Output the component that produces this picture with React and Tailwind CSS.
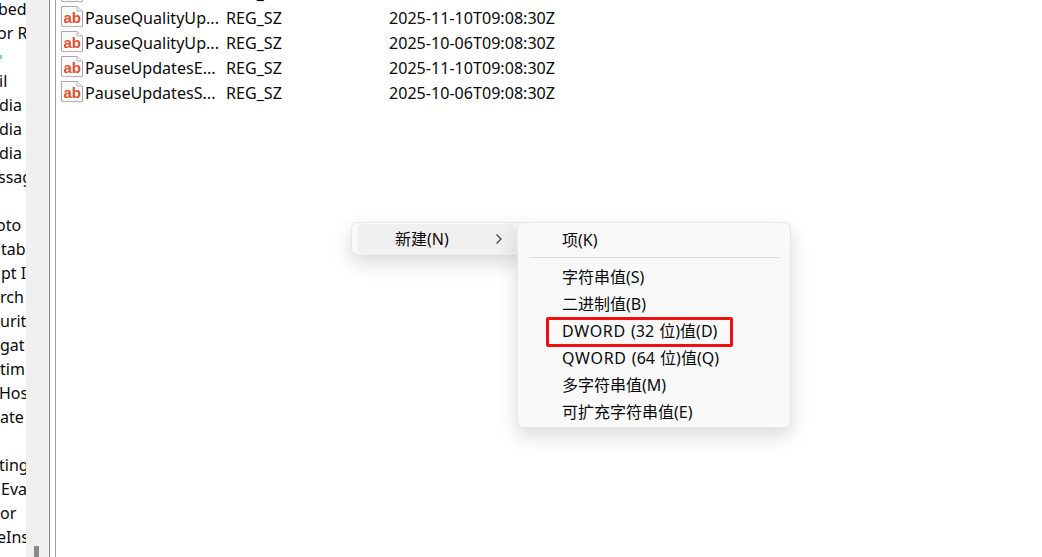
import React from "react";

const UI = { fontFamily: '"Noto Sans", "Noto Sans CJK SC", sans-serif' };

const tree = [
  ["bed", "-ml-[2px]"], ["or R", "-ml-[3px]"], ["", "ml-0"], ["il", "-ml-[1px]"], ["dia", "-ml-[1px]"], ["dia", "-ml-[1px]"], ["dia", "-ml-[1px]"], ["ssag", "-ml-[2px]"], ["", "ml-0"],
  ["oto", "-ml-[4px]"], ["tab", "ml-[1px]"], ["pt I", "ml-[1px]"], ["rch", "ml-0"], ["urit", "ml-0"], ["gat", "ml-0"], ["tim", "ml-0"], ["Hos", "-ml-[1px]"], ["ate", "ml-0"], ["", "ml-0"],
  ["ting", "-ml-[1px]"], ["Eva", "ml-[1px]"], ["or", "ml-0"], ["eIns", "-ml-[3px]"],
];

const rows = [
  ["PauseFeatureSt...", "REG_SZ", ""],
  ["PauseQualityUp...", "REG_SZ", "2025-11-10T09:08:30Z"],
  ["PauseQualityUp...", "REG_SZ", "2025-10-06T09:08:30Z"],
  ["PauseUpdatesE...", "REG_SZ", "2025-11-10T09:08:30Z"],
  ["PauseUpdatesS...", "REG_SZ", "2025-10-06T09:08:30Z"],
];

const sub = [
  ["", "字符串值(S)"],
  ["", "二进制值(B)"],
  ["DWORD", " (32 位)值(D)"],
  ["QWORD", " (64 位)值(Q)"],
  ["", "多字符串值(M)"],
  ["", "可扩充字符串值(E)"],
];

function AbIcon() {
  return (
    <svg width="23" height="22" viewBox="0 0 23 22" className="shrink-0 self-start">
      <path d="M0.5 0.5H16L21.5 5V20.5C19 21.8 17 19.5 14 20.5C11 21.5 9 19.5 6 20.5C4 21 2.5 20.5 0.5 20Z" fill="#fbfbfb" stroke="#a8a8a8" />
      <path d="M16 0.5V5H21.5" fill="#eeeeee" stroke="#b8b8b8" />
      <text x="2.5" y="16.5" fontSize="15" fontWeight="700" fill="#e0502f" style={{ fontFamily: '"Liberation Sans", sans-serif' }}>ab</text>
    </svg>
  );
}

export default function App() {
  return (
    <div className="relative flex h-[557px] w-[1042px] overflow-hidden bg-white text-[16px] text-[#0a0a0a]" style={UI}>
      <div className="-mt-[3px] flex w-[26px] shrink-0 flex-col overflow-hidden">
        {tree.map(([t, pad], i) => (
          <div key={i} className={`flex h-[24px] shrink-0 items-center whitespace-nowrap ${pad}`}>
            {t}
            {i === 2 && <div className="h-[4px] w-[2px] bg-[#7cc4f0]" />}
          </div>
        ))}
      </div>
      <div className="flex w-[23px] shrink-0 flex-col justify-end bg-[#f0f0f0] pl-[8px]">
        <div className="h-[11px] w-[5px] bg-[#8a8a8a]" />
      </div>
      <div className="w-[1px] shrink-0 bg-[#8a8a8a]" />
      <div className="w-[5px] shrink-0 bg-white" />
      <div className="w-[1px] shrink-0 bg-[#a0a0a0]" />
      <div className="-mt-[19px] flex-1 pl-[5px] text-[16.1px]">
        {rows.map((r, i) => (
          <div key={i} className="flex h-[25px] items-center whitespace-nowrap">
            <AbIcon />
            <span className="ml-[1px] w-[141px] shrink-0">{r[0]}</span>
            <span className="w-[163px] shrink-0">{r[1]}</span>
            <span>{r[2]}</span>
          </div>
        ))}
      </div>

      <div className="absolute left-[351px] top-[222px] flex h-[33px] w-[172px] items-center rounded-[6px] border border-[#e6e6e6] bg-[#f9f9f9] px-[6px] shadow-[0_8px_20px_rgba(0,0,0,0.15)]">
        <div className="flex h-[29px] w-full items-center rounded-[4px] bg-[#f0f0f0] pl-[37px]">
          <span>新建(N)</span>
          <svg width="8" height="12" viewBox="0 0 8 12" className="ml-[46px]">
            <path d="M1.5 1.5L6 6L1.5 10.5" fill="none" stroke="#444" strokeWidth="1.3" />
          </svg>
        </div>
      </div>

      <div className="absolute left-[517px] top-[222px] w-[274px] rounded-[6px] border border-[#e6e6e6] bg-[#f9f9f9] pb-[2px] pt-[3px] shadow-[0_8px_20px_rgba(0,0,0,0.15)]">
        <div className="flex h-[27px] items-center pl-[44px]">项(K)</div>
        <div className="mx-[11px] mb-[5px] mt-[4px] h-[1px] bg-[#d9d9d9]" />
        {sub.map(([a, b]) => (
          <div key={b} className="flex h-[27px] items-center whitespace-pre pl-[44px] [word-spacing:1px]">
            {a && <span className="tracking-[0.7px]">{a}</span>}
            {b}
          </div>
        ))}
        <div className="absolute left-[28px] top-[94px] h-[30px] w-[187px] rounded-[2px] border-[3px] border-[#f01010]" />
      </div>
    </div>
  );
}
